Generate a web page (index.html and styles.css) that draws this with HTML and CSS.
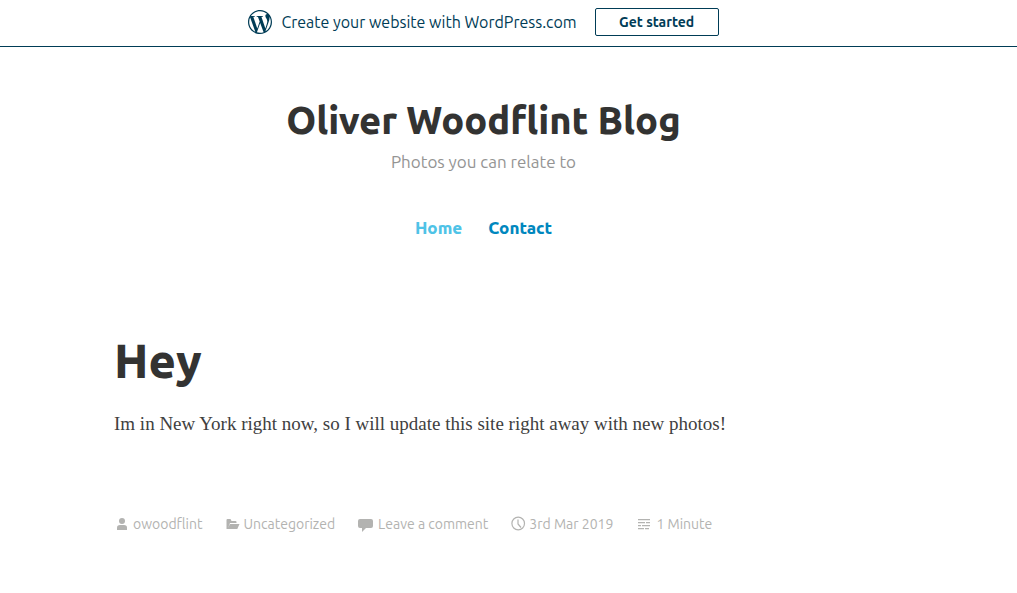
FILE: index.html
```html
<!DOCTYPE html>
<html lang="en">
<head>
<meta charset="utf-8">
<meta name="viewport" content="width=device-width, initial-scale=1">
<title>Oliver Woodflint Blog</title>
<link rel="stylesheet" href="styles.css">
</head>
<body>
<aside class="banner">
  <svg class="banner-logo" viewBox="0 0 24 24" aria-hidden="true"><path d="M21.469 6.825c.84 1.537 1.318 3.3 1.318 5.175 0 3.979-2.156 7.456-5.363 9.325l3.295-9.527c.615-1.54.82-2.771.82-3.864 0-.405-.026-.78-.07-1.11m-7.981.105c.647-.03 1.232-.105 1.232-.105.582-.075.514-.93-.067-.899 0 0-1.755.135-2.88.135-1.064 0-2.85-.15-2.85-.15-.585-.03-.661.855-.075.885 0 0 .54.061 1.125.09l1.68 4.605-2.37 7.08L5.354 6.9c.649-.03 1.234-.1 1.234-.1.585-.075.516-.93-.065-.896 0 0-1.746.138-2.874.138-.2 0-.438-.008-.69-.015C4.911 3.15 8.235 1.215 12 1.215c2.809 0 5.365 1.072 7.286 2.833-.046-.003-.091-.009-.141-.009-1.06 0-1.812.923-1.812 1.914 0 .89.513 1.643 1.06 2.531.411.72.89 1.643.89 2.977 0 .915-.354 1.994-.821 3.479l-1.075 3.585-3.9-11.61.001.014zM12 22.784c-1.059 0-2.081-.153-3.048-.437l3.237-9.406 3.315 9.087c.024.053.05.101.078.149-1.12.393-2.325.609-3.582.609M1.211 12c0-1.564.336-3.05.935-4.39L7.29 21.709C3.694 19.96 1.212 16.271 1.211 12M12 0C5.385 0 0 5.385 0 12s5.385 12 12 12 12-5.385 12-12S18.615 0 12 0"/></svg>
  <span class="banner-text">Create your website with WordPress.com</span>
  <a class="banner-button" href="#">Get started</a>
</aside>
<div class="page">
  <header class="site-header">
    <h1 class="site-title">Oliver Woodflint Blog</h1>
    <p class="site-tagline">Photos you can relate to</p>
    <nav class="site-nav">
      <a class="nav-link nav-link-current" href="#">Home</a>
      <a class="nav-link" href="#">Contact</a>
    </nav>
  </header>
  <main class="post">
    <h2 class="post-title">Hey</h2>
    <p class="post-body">Im in New York right now, so I will update this site right away with new photos!</p>
    <footer class="post-meta">
      <a class="meta-item" href="#"><svg class="meta-icon" viewBox="0 0 16 16" aria-hidden="true"><circle cx="8" cy="5" r="3"/><path d="M3 14v-2.500Q3 9 6 9h4q3 0 3 2.500V14z"/></svg>owoodflint</a>
      <a class="meta-item" href="#"><svg class="meta-icon" viewBox="0 0 16 16" aria-hidden="true"><path d="M1.500 13V4q0-1 1-1h3l1 2h4q1 0 1 1v1H5L3 12 5 8h9.500l-2.200 5z"/></svg>Uncategorized</a>
      <a class="meta-item" href="#"><svg class="meta-icon meta-icon-wide" viewBox="0 0 18 16" aria-hidden="true"><path d="M3 3h11q2 0 2 2v5q0 2-2 2H9l-4 4v-4H3q-2 0-2-2V5q0-2 2-2z"/></svg>Leave a comment</a>
      <a class="meta-item" href="#"><svg class="meta-icon" viewBox="0 0 16 16" aria-hidden="true"><path class="stroke" d="M8 3.500V8l3 3.500M14.500 7.500a6.300 6.300 0 1 1-12.600 0 6.300 6.300 0 0 1 12.600 0z"/></svg>3rd Mar 2019</a>
      <span class="meta-item"><svg class="meta-icon meta-icon-wide" viewBox="0 0 18 16" aria-hidden="true"><path d="M3 3h12v1.300H3zM3 6h7v1.300H3zM11 6h4v1.300h-4zM3 9h3v1.300H3zM7 9h8v1.300H7zM3 12h6v1.300H3zM10 12h4v1.300h-4z"/></svg>1 Minute</span>
    </footer>
  </main>
</div>
</body>
</html>
```
FILE: styles.css
```css
* {
  box-sizing: border-box;
}

body {
  margin: 0;
  background: #fff;
  color: #333332;
  font-family: Ubuntu, "Noto Sans", sans-serif;
}

a {
  color: inherit;
  text-decoration: none;
}

.banner {
  display: flex;
  align-items: center;
  justify-content: center;
  padding: 8px 50px 10px 0;
  border-bottom: 1px solid #003c56;
  color: #003c56;
}

.banner-logo {
  width: 24px;
  height: 24px;
  margin-right: 9px;
  fill: currentColor;
}

.banner-text {
  font-size: 16px;
  line-height: 28px;
}

.banner-button {
  width: 124px;
  margin-left: 18px;
  padding-top: 1px;
  border: 1px solid #003c56;
  border-radius: 2px;
  font-size: 14px;
  font-weight: 600;
  line-height: 25px;
  text-align: center;
}

.page {
  padding: 47px 164px 56px 114px;
}

.site-header {
  text-align: center;
}

.site-title {
  margin: 0;
  font-size: 38px;
  font-weight: 800;
  line-height: 52px;
}

.site-tagline {
  margin: 0;
  color: #949493;
  font-size: 17px;
  line-height: 32px;
}

.site-nav {
  display: flex;
  justify-content: center;
  gap: 26px;
  margin-top: 35px;
  font-size: 17px;
  font-weight: 800;
  line-height: 30px;
}

.nav-link {
  color: #0087be;
}

.nav-link-current {
  color: #4fc3e7;
}

.post {
  margin-top: 86px;
}

.post-title {
  margin: 0;
  font-size: 47px;
  font-weight: 800;
  line-height: 64px;
}

.post-body {
  margin: 16px 0 0;
  color: #404040;
  font-family: "Liberation Serif", serif;
  font-size: 19px;
  line-height: 30px;
}

.post-meta {
  display: flex;
  flex-wrap: wrap;
  gap: 8px 22px;
  margin-top: 73px;
  color: #b3b3b1;
  font-size: 14px;
  line-height: 24px;
}

.meta-item {
  display: flex;
  align-items: center;
  gap: 3px;
}

.meta-icon {
  width: 16px;
  height: 16px;
  fill: currentColor;
}

.meta-icon-wide {
  width: 18px;
}

.stroke {
  fill: none;
  stroke: currentColor;
  stroke-width: 1.2;
}
```
